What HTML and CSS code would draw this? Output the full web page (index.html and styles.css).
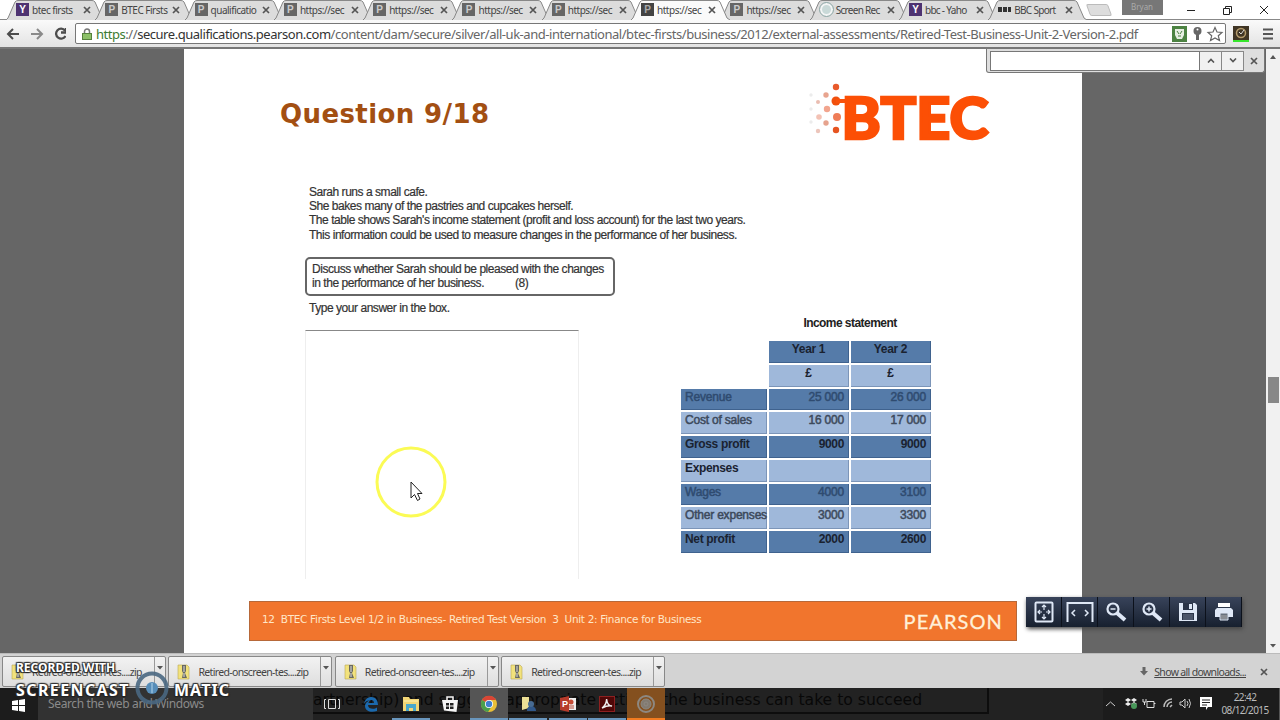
FILE: index.html
```
<!DOCTYPE html>
<html lang="en">
<head>
    <meta charset="UTF-8">
    <meta name="viewport" content="width=device-width, initial-scale=1.0">
    <title>Retired-Test-Business-Unit-2-Version-2.pdf</title>
    <link rel="stylesheet" href="styles.css">
</head>
<body>
    <svg class="defs" width="0" height="0">
        <symbol id="tab-shape" viewBox="0 0 99 20" preserveAspectRatio="none">
            <path d="M0 20 L2 18 L9 2 Q10 .5 12 .5 H86 Q88 .5 89 2 L96 18 L99 20" stroke="#888"/>
        </symbol>
        <symbol id="cross" viewBox="0 0 8 8"><path d="M1 1L7 7M7 1L1 7" stroke="#555" stroke-width="1.7"/></symbol>
        <symbol id="zip" viewBox="0 0 14 16">
            <path d="M1 1H10L12 3V15H1Z" fill="#f2e27c" stroke="#b9a955" stroke-width=".6"/>
            <path d="M5 1H9V7L8 9L10 14H5L6 9L5 7Z" fill="#686860"/>
            <path d="M6 3H8M6 5H8M6 7H8M7 9V13" stroke="#ddd"/>
        </symbol>
        <symbol id="caret" viewBox="0 0 6 4"><path d="M0 0H6L3 3.5Z" fill="#555"/></symbol>
    </svg>

    <div class="tab-strip">
        <div class="tab"><svg class="shape"><use href="#tab-shape"/></svg><span class="fav yahoo">Y</span><span class="label">btec firsts</span><svg class="close"><use href="#cross"/></svg></div>
        <div class="tab"><svg class="shape"><use href="#tab-shape"/></svg><span class="fav">P</span><span class="label">BTEC Firsts</span><svg class="close"><use href="#cross"/></svg></div>
        <div class="tab"><svg class="shape"><use href="#tab-shape"/></svg><span class="fav">P</span><span class="label">qualificatio</span><svg class="close"><use href="#cross"/></svg></div>
        <div class="tab"><svg class="shape"><use href="#tab-shape"/></svg><span class="fav">P</span><span class="label">https://sec</span><svg class="close"><use href="#cross"/></svg></div>
        <div class="tab"><svg class="shape"><use href="#tab-shape"/></svg><span class="fav">P</span><span class="label">https://sec</span><svg class="close"><use href="#cross"/></svg></div>
        <div class="tab"><svg class="shape"><use href="#tab-shape"/></svg><span class="fav">P</span><span class="label">https://sec</span><svg class="close"><use href="#cross"/></svg></div>
        <div class="tab"><svg class="shape"><use href="#tab-shape"/></svg><span class="fav">P</span><span class="label">https://sec</span><svg class="close"><use href="#cross"/></svg></div>
        <div class="tab active"><svg class="shape"><use href="#tab-shape"/></svg><span class="fav">P</span><span class="label">https://sec</span><svg class="close"><use href="#cross"/></svg></div>
        <div class="tab"><svg class="shape"><use href="#tab-shape"/></svg><span class="fav">P</span><span class="label">https://sec</span><svg class="close"><use href="#cross"/></svg></div>
        <div class="tab"><svg class="shape"><use href="#tab-shape"/></svg><span class="fav ring"></span><span class="label tight">Screen Rec</span><svg class="close"><use href="#cross"/></svg></div>
        <div class="tab"><svg class="shape"><use href="#tab-shape"/></svg><span class="fav yahoo">Y</span><span class="label tight">bbc - Yaho</span><svg class="close"><use href="#cross"/></svg></div>
        <div class="tab"><svg class="shape"><use href="#tab-shape"/></svg><span class="fav bbc"><i></i><i></i><i></i></span><span class="label tight">BBC Sport</span><svg class="close"><use href="#cross"/></svg></div>
        <span class="new-tab"></span>
        <span class="user">Bryan</span>
        <svg class="window-buttons" width="100" height="20" fill="none" stroke="#222">
            <path d="M10 10.5H18M46.500 8.500H52.500V14.500H46.500ZM48.500 8V6.500H54.500V12.500H53M83 6L91 14M91 6L83 14"/>
        </svg>
    </div>

    <div class="toolbar">
        <svg class="nav" width="66" height="20" fill="none" stroke="#4c4c4c" stroke-width="2">
            <path d="M19 10H8M13 5L8 10L13 15"/>
            <path d="M31 10H42M37 5L42 10L37 15" stroke="#8a8a8a"/>
            <path d="M65 6.500A5 5 0 1 0 65.500 12M66 4V8.500H61" stroke-width="2.300"/>
        </svg>
        <div class="address">
            <svg width="10" height="12"><path d="M2.500 6V3.500A2.500 2.500 0 0 1 7.500 3.500V6" fill="none" stroke="#777" stroke-width="1.500"/><rect x=".5" y="5.500" width="9" height="6" fill="#8cc068" stroke="#55803c"/></svg>
            <span class="url"><span class="secure">https</span>://<b>secure.qualifications.pearson.com</b>/content/dam/secure/silver/all-uk-and-international/btec-firsts/business/2012/external-assessments/Retired-Test-Business-Unit-2-Version-2.pdf</span>
            <svg class="address-icons" width="52" height="16">
                <rect width="15" height="16" fill="#4c8242"/>
                <path d="M3 3H12V9L10 13H5L3 9Z" fill="#e7eee3"/><path d="M5 5L7 8M10 5L8 8M6 10H9" stroke="#4c8242" fill="none"/>
                <circle cx="25.500" cy="5" r="4" fill="#666"/><circle cx="25.500" cy="3.500" r="1" fill="#fff"/><path d="M25.500 8V14" stroke="#666" stroke-width="3"/>
                <path d="M43 1.500L45 6L50 6.500L46.300 9.800L47.500 14.500L43 12L38.500 14.500L39.700 9.800L36 6.500L41 6Z" fill="none" stroke="#666" stroke-width="1.200"/>
            </svg>
        </div>
        <svg class="extensions" width="42" height="18">
            <rect width="16" height="15" y="1" fill="#403524"/><circle cx="8" cy="8" r="4.500" fill="none" stroke="#b39a6b" stroke-width="1.500"/><path d="M6 7L8 9L11 5" stroke="#ddd" fill="none"/><rect y="15" width="16" height="2" fill="#36e52c"/>
            <path d="M30 4.500H40M30 9H40M30 13.500H40" stroke="#555" stroke-width="2"/>
        </svg>
    </div>

    <div class="viewer">
        <div class="page">
            <div class="page-header">
                <h1>Question 9/18</h1>
                <svg class="logo" width="184" height="60" viewBox="808 83 184 60">
                    <g fill="#ef7d58">
                        <circle cx="836" cy="87" r="3.200" fill="#e85a2b"/><circle cx="836" cy="101" r="4.500" fill="#f1500d"/><circle cx="837" cy="117" r="4"/><circle cx="836" cy="130" r="3.200" fill="#e65420"/>
                        <circle cx="826" cy="95" r="2.700" fill="#e8a48f"/><circle cx="827" cy="109" r="3.200" fill="#f2a58e"/><circle cx="826" cy="123" r="2.700" fill="#e6a38e"/>
                        <circle cx="818" cy="102" r="2" fill="#eabdb1"/><circle cx="819" cy="117" r="2.800" fill="#f3c2b5"/><circle cx="818" cy="131" r="2.200" fill="#ecc5bb"/>
                        <circle cx="811" cy="95" r="1.700" fill="#ececec"/><circle cx="811" cy="109" r="1.700" fill="#ececec"/><circle cx="811" cy="122" r="1.700" fill="#ececec"/>
                    </g>
                    <path d="M836 101H850" stroke="#f9520c" stroke-width="4"/>
                    <text x="841.500" y="138.500" textLength="147" lengthAdjust="spacingAndGlyphs">BTEC</text>
                </svg>
            </div>
            <div class="question">
                <p>Sarah runs a small cafe.</p>
                <p>She bakes many of the pastries and cupcakes herself.</p>
                <p>The table shows Sarah's income statement (profit and loss account) for the last two years.</p>
                <p>This information could be used to measure changes in the performance of her business.</p>
            </div>
            <div class="task">
                <p>Discuss whether Sarah should be pleased with the changes</p>
                <p>in the performance of her business.<span class="marks">(8)</span></p>
            </div>
            <div class="work">
                <div class="answer">
                    <p>Type your answer in the box.</p>
                    <div class="answer-box"></div>
                </div>
                <div class="statement">
                    <h2>Income statement</h2>
                    <div class="table">
                        <span class="none"></span><span class="dark mid">Year 1</span><span class="dark mid">Year 2</span>
                        <span class="none"></span><span class="mid">£</span><span class="mid">£</span>
                        <span class="dark faint">Revenue</span><span class="dark faint num">25 000</span><span class="dark faint num">26 000</span>
                        <span class="soft">Cost of sales</span><span class="soft num">16 000</span><span class="soft num">17 000</span>
                        <span class="dark">Gross profit</span><span class="dark num">9000</span><span class="dark num">9000</span>
                        <span>Expenses</span><span></span><span></span>
                        <span class="dark faint">Wages</span><span class="dark faint num">4000</span><span class="dark faint num">3100</span>
                        <span class="soft">Other expenses</span><span class="soft num">3000</span><span class="soft num">3300</span>
                        <span class="dark">Net profit</span><span class="dark num">2000</span><span class="dark num">2600</span>
                    </div>
                </div>
            </div>
            <div class="page-footer">
                <span class="footer-text">12&nbsp; BTEC Firsts Level 1/2 in Business- Retired Test Version&nbsp; 3&nbsp; Unit 2: Finance for Business</span>
                <span class="pearson">PEARSON</span>
            </div>
        </div>
        <div class="scrollbar">
            <svg class="up" width="6" height="4"><path d="M0 4H6L3 0Z" fill="#555"/></svg>
            <span class="thumb"></span>
            <svg class="down" width="6" height="4"><use href="#caret"/></svg>
        </div>
        <div class="find-bar">
            <span class="find-input"></span>
            <span class="find-button"><svg width="8" height="5"><path d="M1 4.500L4 1.500L7 4.500" fill="none" stroke="#555" stroke-width="1.600"/></svg></span>
            <span class="find-button"><svg width="8" height="5"><path d="M1 .5L4 3.500L7 .5" fill="none" stroke="#555" stroke-width="1.600"/></svg></span>
            <svg class="find-close" width="8" height="8"><use href="#cross"/></svg>
        </div>
        <div class="pdf-tools">
            <span><svg width="20" height="22" fill="none" stroke="#dfe8f6"><rect x="1.500" y="1.500" width="17" height="19" rx="1" stroke-width="2"/><path d="M10 4V9M10 13V18M4 11H8M12 11H16M8 6L10 4L12 6M8 16L10 18L12 16M6 9L4 11L6 13M14 9L16 11L14 13" stroke-width="1.200"/></svg></span>
            <span><svg width="28" height="22" fill="none" stroke="#dfe8f6"><path d="M1.500 21V2H26.500V21" stroke-width="2"/><path d="M9 9L6 12L9 15M19 9L22 12L19 15" stroke-width="1.500"/></svg></span>
            <span><svg width="22" height="22" fill="none" stroke="#dfe8f6"><circle cx="8" cy="8" r="5.500" stroke-width="2.200"/><path d="M5.500 8H10.500" stroke-width="1.500"/><path d="M12 12L20 19" stroke-width="4"/></svg></span>
            <span><svg width="22" height="22" fill="none" stroke="#dfe8f6"><circle cx="8" cy="8" r="5.500" stroke-width="2.200"/><path d="M5.500 8H10.500M8 5.500V10.500" stroke-width="1.500"/><path d="M12 12L20 19" stroke-width="4"/></svg></span>
            <span><svg width="20" height="20"><path d="M1 1H17L19 3V19H1Z" fill="#dfe8f6"/><path d="M5 1H15V8H5ZM4 11H16V18H4Z" fill="#2a3448"/><path d="M11 2H14V7H11Z" fill="#dfe8f6"/><path d="M5 12H15V18H5Z" fill="#4c566a"/></svg></span>
            <span><svg width="20" height="20"><path d="M4 1H16V5H4Z" fill="#fff"/><path d="M3 6H17L19 8V15H1V8Z" fill="#dfe8f6"/><path d="M6 11H14V18H6Z" fill="#68717d" stroke="#dfe8f6"/><path d="M7 14H13M7 16H13" stroke="#aaa"/></svg></span>
        </div>
        <svg class="pointer" width="72" height="72">
            <circle cx="36" cy="36" r="34" fill="none" stroke="#fbfb55" stroke-width="3"/>
            <path d="M36 36V52L39.500 48.500L42.500 54.500L45 53L42.500 47.500H47Z" fill="#fff" stroke="#222"/>
        </svg>
    </div>

    <div class="downloads">
        <div class="download"><svg class="zip"><use href="#zip"/></svg><span>Retired-onscreen-tes....zip</span><i><svg width="6" height="4"><use href="#caret"/></svg></i></div>
        <div class="download"><svg class="zip"><use href="#zip"/></svg><span>Retired-onscreen-tes....zip</span><i><svg width="6" height="4"><use href="#caret"/></svg></i></div>
        <div class="download"><svg class="zip"><use href="#zip"/></svg><span>Retired-onscreen-tes....zip</span><i><svg width="6" height="4"><use href="#caret"/></svg></i></div>
        <div class="download"><svg class="zip"><use href="#zip"/></svg><span>Retired-onscreen-tes....zip</span><i><svg width="6" height="4"><use href="#caret"/></svg></i></div>
        <div class="show-all">
            <svg width="8" height="9"><path d="M2.500 0H5.500V4H8L4 8.500L0 4H2.500Z" fill="#666"/></svg>
            <span>Show all downloads...</span>
            <svg class="bar-close" width="8" height="8"><use href="#cross"/></svg>
        </div>
    </div>

    <div class="taskbar">
        <div class="behind">artnership) and suggest appropriate actions the business can take to succeed</div>
        <div class="start"><svg width="14" height="13" fill="#fff"><path d="M0 2L6 1V6H0ZM7 1L13 0V6H7ZM0 7H6V12L0 11ZM7 7H13V13L7 12Z"/></svg></div>
        <div class="search">Search the web and Windows</div>
        <div class="apps">
            <span class="app"><svg width="18" height="14" fill="none" stroke="#ddd"><path d="M5.500 2.500H12.500V11.500H5.500ZM3 2.500H1.500V11.500H3M15 2.500H16.500V11.500H15"/></svg></span>
            <span class="app"><svg width="18" height="18"><path d="M2 9C3 3 7 2 9.500 2C14 2 16 6 16 10H6C6 14 12 15 15 12.500V16C9 18 3 16 3 11C3 8 6 6 8 5C4 6 3 7 2 9ZM6.500 8H12C12 4 7 4 6.500 8Z" fill="#1b69ad" fill-rule="evenodd"/></svg></span>
            <span class="app open"><svg width="18" height="16"><path d="M1 1H7L8 3H17V15H1Z" fill="#f3d675"/><path d="M4 8H14V15H11V12H7V15H4Z" fill="#4aa8cc"/><path d="M2 5H16" stroke="#fff2b3"/></svg></span>
            <span class="app"><svg width="18" height="18"><path d="M1 5H17L15.500 17L3 15.500Z" fill="#f5f5f5"/><path d="M6 5V2H12V5" fill="none" stroke="#f5f5f5" stroke-width="1.500"/><path d="M5 8H8V10.500H5ZM9 8H12.500V10.500H9ZM5 11.500H8V14H5ZM9 11.500H12.500V14H9Z" fill="#222"/></svg></span>
            <span class="app open chrome"><svg width="18" height="18"><circle cx="9" cy="9" r="8" fill="#e9bf38"/><path d="M9 9L2 5A8 8 0 0 1 16 5H9Z" fill="#d94535"/><path d="M9 9L2 5A8 8 0 0 0 8 17L12 11Z" fill="#4b9f4d"/><circle cx="9" cy="9" r="4" fill="#fff"/><circle cx="9" cy="9" r="3.200" fill="#3f7fd0"/></svg></span>
            <span class="app open"><svg width="18" height="18"><path d="M3 2H10V13L3 15Z" fill="#ecdf95"/><path d="M8 16C8 12 10 11 12 11C15 11 17 13 17 16Z" fill="#31588a"/><circle cx="12" cy="9" r="3" fill="#476b93"/></svg></span>
            <span class="app open"><svg width="18" height="16"><rect x="7" y="2" width="10" height="12" fill="#eee"/><circle cx="12" cy="6" r="2.500" fill="#c54b35"/><path d="M9 10H15M9 12H15" stroke="#bb4b38"/><path d="M1 2L10 0V16L1 14Z" fill="#b63b2b"/><text x="3" y="11" fill="#fff">P</text></svg></span>
            <span class="app open"><svg width="18" height="18"><rect x="1.500" y="1.500" width="15" height="15" fill="#500808" stroke="#8d2020"/><path d="M4 13C7 11 9 7 8.500 4C9 8 11 11 14 11C10 10 6 12 4 13" fill="none" stroke="#eee" stroke-width="1.500"/></svg></span>
            <span class="app recorder"><svg width="20" height="20" fill="none" stroke="#8d8881"><circle cx="10" cy="10" r="8" stroke-width="2"/><circle cx="10" cy="10" r="5" fill="#827a70"/><circle cx="10" cy="10" r="2"/></svg></span>
        </div>
        <div class="tray">
            <svg width="114" height="20" fill="none" stroke="#ccc">
                <path d="M3 12L7.500 8L12 12"/>
                <path d="M22 6L25 4L28 6L25 8ZM28 6L31 4L34 6L31 8ZM22 10L25 8L28 10L25 12ZM28 10L31 8L34 10L31 12Z" fill="#eee" stroke="none"/><circle cx="31" cy="12" r="3" fill="#49985a" stroke="none"/>
                <path d="M44 7.500H51V13.500H44ZM51 9.500H52.500M40 5V8H43V5M41.500 8V11" stroke="#ddd"/>
                <path d="M61 13A8 8 0 0 1 69 5M64 13A5 5 0 0 1 69 8M67 13L69 11" stroke="#bbb" stroke-width="1.500"/>
                <path d="M77 8H79L82 5V14L79 11H77ZM84 7Q86 9.500 84 12M86 5Q89 9.500 86 14"/>
                <path d="M97 3H109V13H105L103 16V13H97Z" fill="#fff" stroke="none"/><path d="M99 6H107M99 8.500H107M99 11H104" stroke="#222"/>
            </svg>
            <div class="clock"><span>22:42</span><span>08/12/2015</span></div>
        </div>
    </div>

    <div class="watermark">
        <div class="recorded">RECORDED WITH</div>
        <div class="brand"><span class="brand-left">SCREENCAST</span><svg width="36" height="36"><circle cx="18" cy="18" r="14.500" fill="none" stroke="#496781" stroke-width="4" opacity=".9"/><circle cx="18" cy="18" r="6" fill="#568db9"/><path d="M18 13V23" stroke="#95bedb" stroke-width="1.500"/></svg><span class="brand-right">MATIC</span></div>
    </div>
</body>
</html>
```

FILE: styles.css
```
* {
    box-sizing: border-box;
}
body {
    margin: 0;
    width: 1280px;
    height: 720px;
    overflow: hidden;
    position: relative;
    display: flex;
    flex-direction: column;
    background: #fff;
    font-family: "Noto Sans", "Open Sans", sans-serif;
}
svg {
    display: block;
    flex: none;
}
h1, h2, p {
    margin: 0;
}
.defs {
    position: absolute;
}

/* Browser tabs */
.tab-strip {
    height: 20px;
    flex: none;
    display: flex;
    align-items: center;
    padding-left: 6px;
    border-bottom: 1px solid #888;
}
.tab {
    position: relative;
    width: 89.3px;
    height: 20px;
    flex: none;
    display: flex;
    align-items: center;
    padding-left: 10px;
}
.shape {
    position: absolute;
    left: 0;
    top: 0;
    width: 99px;
    height: 20px;
    fill: #dcdcdc;
}
.active {
    z-index: 1;
}
.active .shape {
    fill: #fafafa;
}
.fav {
    position: relative;
    width: 13px;
    height: 13px;
    flex: none;
    background: #666;
    color: #ccc;
    font: bold 10px/13px "Liberation Sans", sans-serif;
    text-align: center;
}
.active .fav {
    background: #444;
    color: #aaa;
}
.yahoo {
    background: #4d3271;
    color: #fff;
}
.ring {
    border-radius: 50%;
    background: #c9d9d8;
    border: 2px solid #f3f5f5;
    outline: 1px solid #8ea9a8;
}
.bbc {
    background: none;
    display: flex;
    gap: 1px;
    align-items: center;
}
.bbc i {
    width: 4px;
    height: 5px;
    background: #333;
}
.label {
    position: relative;
    width: 47px;
    flex: none;
    margin-left: 3px;
    white-space: nowrap;
    color: #444;
    font-size: 10px;
    line-height: 16px;
    letter-spacing: -.5px;
}
.tight {
    letter-spacing: -.7px;
}
.close {
    position: relative;
    width: 8px;
    height: 8px;
    margin-left: 4px;
}
.new-tab {
    width: 22px;
    height: 12px;
    margin-left: 10px;
    background: #ddd;
    border: 1px solid #bbb;
    border-radius: 2px;
    transform: skewX(20deg);
}
.user {
    width: 41px;
    height: 15px;
    margin-left: 12px;
    align-self: flex-start;
    background: #777;
    color: #aaa;
    font-size: 8px;
    line-height: 13px;
    text-align: center;
}
.window-buttons {
    margin-left: 14px;
}

/* Address bar */
.toolbar {
    height: 29px;
    flex: none;
    display: flex;
    align-items: center;
    background: linear-gradient(#fafafa, #e3e3e3);
    border-bottom: 2px solid #777;
}
.nav {
    margin-right: 9px;
}
.address {
    width: 1151px;
    height: 21px;
    display: flex;
    align-items: center;
    padding-left: 6px;
    background: #fff;
    border: 1px solid #777;
    border-radius: 2px;
}
.url {
    width: 1070px;
    margin-left: 4px;
    white-space: nowrap;
    color: #666;
    font-size: 13px;
    line-height: 18px;
    letter-spacing: -.46px;
}
.url b {
    color: #333;
    font-weight: normal;
}
.url .secure {
    color: #3c7b32;
}
.address-icons {
    margin-left: 6px;
}
.extensions {
    margin-left: 7px;
}

/* PDF viewer */
.viewer {
    position: relative;
    height: 604px;
    flex: none;
    display: flex;
    background: #666;
}
.page {
    width: 898px;
    margin-left: 184px;
    display: flex;
    flex-direction: column;
    background: #fff;
}
.page-header {
    height: 136px;
    flex: none;
    display: flex;
    justify-content: space-between;
    padding: 34px 90px 0 96px;
}
h1 {
    margin-top: 15px;
    color: #a34f12;
    font: bold 26px/32px "DejaVu Sans", sans-serif;
    letter-spacing: .4px;
}
.logo text {
    fill: #fc4f05;
    stroke: #fc4f05;
    stroke-width: 2.5;
    font: 900 57px Lato, sans-serif;
}
.question, .task, .answer {
    color: #333;
    font: 12px/14.2px "Liberation Sans", sans-serif;
    letter-spacing: -.46px;
    white-space: nowrap;
    -webkit-text-stroke: .2px #333;
}
.question {
    height: 72px;
    flex: none;
    padding-left: 125px;
}
.task {
    width: 310px;
    height: 39px;
    flex: none;
    margin-left: 121px;
    padding: 3px 0 0 5px;
    border: 2px solid #666;
    border-radius: 5px;
}
.marks {
    margin-left: 31px;
}
.work {
    height: 305px;
    flex: none;
    display: flex;
    padding-left: 121px;
}
.answer {
    width: 274px;
    padding-top: 5px;
}
.answer p {
    padding-left: 4px;
}
.answer-box {
    height: 249px;
    margin-top: 15px;
    border: 1px solid #eee;
    border-top-color: #888;
    border-bottom: 0;
}
.statement {
    width: 250px;
    margin-left: 102px;
    padding-top: 19px;
}
h2 {
    width: 162px;
    margin-left: 88px;
    color: #222;
    font: bold 12px/16px "Liberation Sans", sans-serif;
    letter-spacing: -.55px;
    text-align: center;
}
.table {
    height: 212px;
    margin-top: 10px;
    display: grid;
    grid-template-columns: 86px 80px 80px;
    grid-template-rows: repeat(9, 1fr);
    gap: 2px;
    color: #1a2230;
    font: bold 12px/16px "Liberation Sans", sans-serif;
    letter-spacing: -.35px;
}
.table span {
    padding: 0 4px;
    white-space: nowrap;
    background: #9fb8da;
    border: 1px solid #7c95b8;
    border-width: 0 1px 1px 0;
}
.table .dark {
    background: #557ba9;
    border-color: #3f628e;
}
.table .none {
    background: none;
    border: 0;
}
.table .mid {
    text-align: center;
}
.table .num {
    text-align: right;
}
.table .faint, .table .soft {
    font-weight: normal;
    letter-spacing: -.2px;
    -webkit-text-stroke: .5px;
}
.table .faint {
    color: #2f4b70;
}
.table .soft {
    color: #3d4a5c;
}
.page-footer {
    width: 768px;
    height: 40px;
    flex: none;
    margin-left: 65px;
    display: flex;
    justify-content: space-between;
    padding: 0 13px 0 12px;
    background: #f1752d;
    border: 1px solid #b76839;
    color: #ffe7c8;
}
.footer-text {
    font: 10.5px/34px "DejaVu Sans", sans-serif;
    letter-spacing: -.32px;
    white-space: pre;
}
.pearson {
    font: 20px/38px Lato, sans-serif;
    letter-spacing: 1.1px;
    color: #fff0d9;
    -webkit-text-stroke: .3px;
}
.scrollbar {
    width: 14px;
    margin-left: auto;
    display: flex;
    flex-direction: column;
    align-items: center;
    background: #f1f1f1;
}
.up {
    margin-top: 6px;
}
.thumb {
    width: 11px;
    height: 26px;
    margin-top: 318px;
    background: #888;
}
.down {
    margin-top: auto;
    margin-bottom: 5px;
}
.find-bar {
    position: absolute;
    left: 986px;
    top: 0;
    width: 279px;
    height: 24px;
    display: flex;
    align-items: center;
    padding: 0 0 0 3px;
    background: #dedede;
    border: 1px solid #777;
    border-top: 0;
    border-radius: 0 0 3px 3px;
}
.find-input {
    width: 210px;
    height: 20px;
    background: #fff;
    border: 1px solid #777;
}
.find-button {
    width: 22px;
    height: 20px;
    display: flex;
    align-items: center;
    justify-content: center;
    background: #f1f1f1;
    border: 1px solid #888;
    border-left: 0;
}
.find-close {
    margin-left: 6px;
}
.pdf-tools {
    position: absolute;
    left: 1026px;
    top: 548px;
    width: 216px;
    height: 30px;
    display: flex;
    background: #1b2536;
    box-shadow: 1px 2px 4px #444;
    border-radius: 2px;
}
.pdf-tools span {
    width: 36px;
    display: flex;
    align-items: center;
    justify-content: center;
    background: linear-gradient(#38435a, #17202f);
    border-right: 1px solid #0c111b;
}
.pointer {
    position: absolute;
    left: 375px;
    top: 397px;
}

/* Download shelf */
.downloads {
    height: 35px;
    flex: none;
    display: flex;
    align-items: center;
    gap: 2.4px;
    padding: 1px 0 0 2px;
    background: #d3d3d3;
    border-top: 1px solid #bbb;
    color: #444;
    font-size: 10.5px;
    letter-spacing: -.66px;
}
.download {
    width: 164px;
    height: 31px;
    display: flex;
    align-items: center;
    padding-left: 8px;
    background: linear-gradient(#f2f2f2, #dedede);
    border: 1px solid #888;
    border-radius: 2px;
    white-space: nowrap;
}
.zip {
    width: 14px;
    height: 16px;
}
.download span {
    margin-left: 7px;
}
.download i {
    width: 11px;
    height: 29px;
    margin-left: auto;
    padding: 9px 0 0 2px;
    border-left: 1px solid #999;
}
.show-all {
    margin-left: auto;
    padding-right: 12px;
    display: flex;
    align-items: center;
    text-decoration: underline;
}
.show-all span {
    margin-left: 6px;
}
.bar-close {
    margin-left: 14px;
}

/* Taskbar */
.taskbar {
    position: relative;
    height: 32px;
    flex: none;
    display: flex;
    overflow: hidden;
    background: #222;
}
.behind {
    position: absolute;
    left: 250px;
    top: -5px;
    width: 739px;
    height: 31px;
    padding-left: 61px;
    border: 2px solid #0d0d0d;
    color: #080808;
    font: 15.6px/30px "DejaVu Sans", sans-serif;
    white-space: nowrap;
}
.start {
    position: relative;
    width: 38px;
    padding: 11px 0 0 12px;
    background: #1c1c1c;
}
.search {
    position: relative;
    width: 275px;
    padding-left: 10px;
    background: #323232;
    color: #8b8b8b;
    font-size: 12px;
    line-height: 32px;
    letter-spacing: -.36px;
}
.apps {
    position: relative;
    display: flex;
    gap: 1.3px;
}
.app {
    width: 38px;
    display: flex;
    align-items: center;
    justify-content: center;
}
.app text {
    font: bold 9px "Liberation Sans", sans-serif;
}
.open {
    box-shadow: inset 0 -2px #6996bd;
}
.chrome {
    background: #555;
}
.recorder {
    background: #84501f;
    box-shadow: inset 0 -2px #f27b20;
}
.tray {
    position: relative;
    margin-left: auto;
    padding-right: 4px;
    display: flex;
    align-items: center;
    background: #1c1c1c;
    border-right: 1px solid #555;
}
.clock {
    width: 74px;
    margin-left: -9px;
    padding-left: 0;
    margin-right: -7px;
    display: flex;
    flex-direction: column;
    align-items: center;
    color: #bbb;
    font-size: 10px;
    line-height: 13.5px;
    letter-spacing: -.6px;
}

/* Recorder mark over the lower left corner */
.watermark {
    position: absolute;
    left: 16px;
    top: 660px;
    color: #fff;
    font-weight: bold;
    text-shadow: 1px 1px 1px #222, -1px -1px 1px #333, 1px -1px 1px #333, -1px 1px 1px #222;
}
.recorded {
    font-size: 12px;
    line-height: 15px;
}
.brand {
    display: flex;
    align-items: center;
    margin-top: -3px;
    font-size: 16px;
    line-height: 36px;
}
.brand svg {
    margin: -4px 4px 0;
}
.brand-left {
    letter-spacing: 1.4px;
}
.brand-right {
    letter-spacing: 1.1px;
}
```
